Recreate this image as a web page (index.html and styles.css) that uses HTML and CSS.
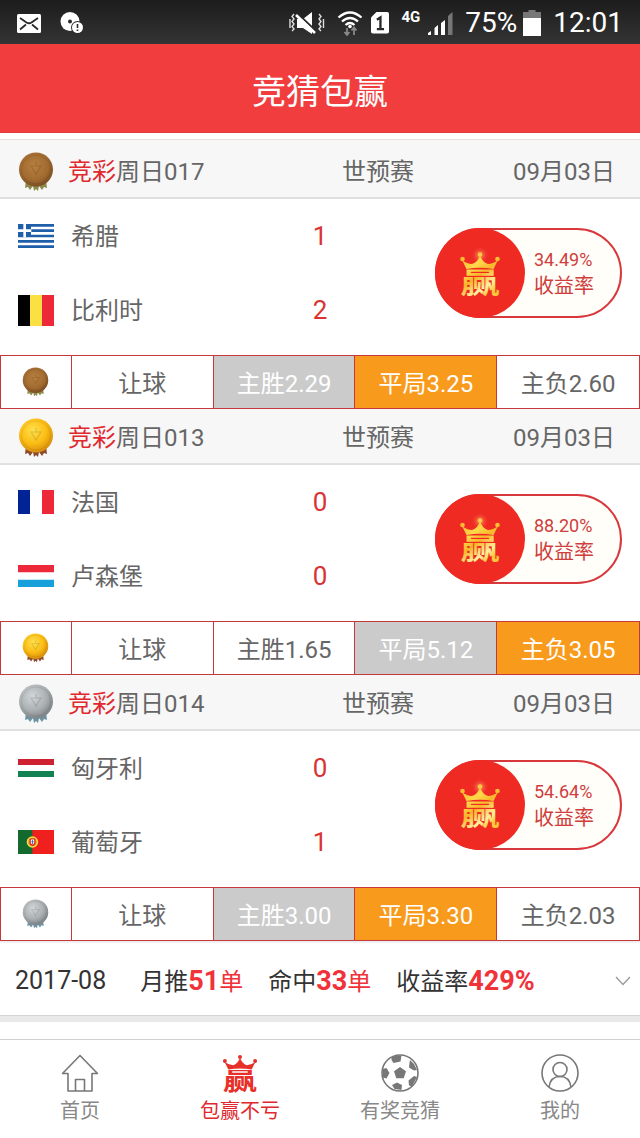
FILE: index.html
```html
<!DOCTYPE html>
<html lang="zh-CN">

<head>
    <meta charset="UTF-8">
    <meta name="viewport" content="width=device-width, initial-scale=1">
    <title>竞猜包赢</title>
    <link rel="stylesheet" href="styles.css">
</head>

<body>
    <!-- shared icons -->
    <svg class="sprite" aria-hidden="true">
        <defs>
            <radialGradient id="bronze" cx="0.45" cy="0.4" r="0.6">
                <stop offset="0" stop-color="#b9803f" />
                <stop offset="0.7" stop-color="#a06a30" />
                <stop offset="1" stop-color="#7c4f22" />
            </radialGradient>
            <radialGradient id="gold" cx="0.42" cy="0.35" r="0.65">
                <stop offset="0" stop-color="#ffe14d" />
                <stop offset="0.6" stop-color="#fbbd14" />
                <stop offset="1" stop-color="#d98f0c" />
            </radialGradient>
            <radialGradient id="silver" cx="0.4" cy="0.35" r="0.65">
                <stop offset="0" stop-color="#d3d7d9" />
                <stop offset="0.65" stop-color="#a9aeb1" />
                <stop offset="1" stop-color="#7f8588" />
            </radialGradient>
            <linearGradient id="shine" gradientUnits="userSpaceOnUse" x1="0" y1="0" x2="30" y2="42">
                <stop offset="0" stop-color="#f7a823" />
                <stop offset="0.4" stop-color="#ffd84a" />
                <stop offset="0.6" stop-color="#f9b52a" />
                <stop offset="0.85" stop-color="#fff0a0" />
                <stop offset="1" stop-color="#fcc63c" />
            </linearGradient>
            <radialGradient id="glow">
                <stop offset="0" stop-color="#ffb070" stop-opacity="0.9" />
                <stop offset="1" stop-color="#ef2a22" stop-opacity="0" />
            </radialGradient>
            <clipPath id="below-crown">
                <rect x="0" y="18.500" width="40" height="27" />
            </clipPath>
        </defs>
        <symbol id="medal" viewBox="0 0 36 40">
            <path d="M8 28l-1 8 3-1 2 3 3-4 1 5 2-2 2 2 1-5 3 4 2-3 3 1-1-8z" style="fill: currentColor" />
            <circle cx="18" cy="17.500" r="17" />
            <circle cx="18" cy="17.500" r="14.500" style="fill: none" stroke="#000" stroke-opacity="0.08" />
            <path d="M13 14h10l-5 8zM18 10v4" style="fill: none" stroke="#000" stroke-opacity="0.1" stroke-width="1.500" />
        </symbol>
        <symbol id="crown" viewBox="0 0 40 44">
            <circle cx="20" cy="3.500" r="2.300" />
            <circle cx="2.500" cy="8" r="2.300" />
            <circle cx="37.500" cy="8" r="2.300" />
            <path d="M2 9Q7 13 12 13Q18 11 20 4Q22 11 28 13Q33 13 38 9L33.500 18Q20 15.500 6.500 18z" />
        </symbol>
    </svg>

    <div class="status-bar">
        <div class="status-group">
            <svg class="status-mail" viewBox="0 0 24 19">
                <rect width="24" height="19" rx="1.500" fill="#fff" />
                <path d="M3 4l6.500 4.500q2.500 1.500 5 0L21 4M3 15.500l6-5M21 15.500l-6-5" fill="none" stroke="#292929" stroke-width="1.800" />
            </svg>
            <svg class="status-disc" viewBox="0 0 24 22">
                <circle cx="10" cy="9.500" r="9.500" fill="#fff" />
                <circle cx="10" cy="9.500" r="2" fill="#292929" />
                <circle cx="17.500" cy="15.500" r="6.500" fill="#292929" />
                <circle cx="17.500" cy="15.500" r="5.500" fill="#fff" />
                <path d="M17.500 12v4M17.500 17.500v1.500" stroke="#292929" stroke-width="1.600" />
            </svg>
        </div>
        <div class="status-group status-right">
            <svg class="status-mute" viewBox="0 0 36 24">
                <path d="M8 8h6l9-7v22l-9-6H8z" fill="#fff" />
                <path d="M9 3l18 17" stroke="#292929" stroke-width="2" />
                <path d="M7 4l19 18" stroke="#fff" stroke-width="2.600" />
                <path d="M5 3l-2 2.500 2 2.500-2 2.500 2 2.500-2 2.500 2 2.500-2 2M1 8v9M30 3l2 2.500-2 2.500 2 2.500-2 2.500 2 2.500-2 2.500 2 2M34.500 8v9" fill="none" stroke="#ddd" stroke-width="1.400" />
            </svg>
            <svg class="status-wifi" viewBox="0 0 26 26">
                <path d="M1.500 7.500q11.500-10 23 0M5 11.500q8-7 16 0M8.500 15q4.500-4 9 0" fill="none" stroke="#fff" stroke-width="2.300" />
                <circle cx="13" cy="16.500" r="1.800" fill="#fff" />
                <path d="M10 18v7M7.500 22l2.500 3 2.500-3M17 25v-7M14.500 20.500l2.500-3 2.500 3" fill="none" stroke="#888" stroke-width="1.800" />
            </svg>
            <svg class="status-sim" viewBox="0 0 20 24">
                <path d="M6 0h12q2 0 2 2v20q0 2-2 2H2q-2 0-2-2V6z" fill="#fff" />
                <path d="M6.500 8.500l4-2.500v13M6.500 19h8" fill="none" stroke="#292929" stroke-width="2.600" />
            </svg>
            <span class="network">4G</span>
            <svg class="status-signal" viewBox="0 0 25 24">
                <path d="M0 24v-2l3-2v4zM6.500 24v-7l3.500-3v10zM13 24V12l4-3v15z" fill="#fff" />
                <path d="M20 24V5l4.500-4v23z" fill="#777" />
            </svg>
            <span class="battery-text">75%</span>
            <svg class="status-battery" viewBox="0 0 18 26">
                <path d="M5.500 0h7v2H18v7H0V2h5.500z" fill="#777" />
                <path d="M0 8h18v18H0z" fill="#fff" />
            </svg>
            <span class="clock">12:01</span>
        </div>
    </div>

    <header class="title-bar">
        <h1>竞猜包赢</h1>
    </header>

    <main class="matches">
        <section class="match">
            <div class="match-head">
                <svg class="medal bronze" viewBox="0 0 36 40"><use href="#medal" fill="url(#bronze)" /></svg>
                <h2><em>竞彩</em>周日017</h2>
                <span class="league">世预赛</span>
                <span>09月03日</span>
            </div>
            <div class="match-body">
                <div class="teams">
                    <div class="team">
                        <svg class="flag" viewBox="0 0 36 24">
                            <path fill="#1f5ea8" d="M0 0h36v24H0z" />
                            <path stroke="#fff" stroke-width="2.670" d="M13 4h23M13 9.330h23M0 14.670h36M0 20h36" />
                            <path stroke="#fff" stroke-width="2.670" d="M0 6.670h13.330M6.670 0v13.330" />
                        </svg>
                        <span>希腊</span>
                        <b class="score">1</b>
                    </div>
                    <div class="team">
                        <svg class="flag" viewBox="0 0 36 31">
                            <path d="M0 0h12v31H0z" />
                            <path fill="#fae042" d="M12 0h12v31H12z" />
                            <path fill="#ed2939" d="M24 0h12v31H24z" />
                        </svg>
                        <span>比利时</span>
                        <b class="score">2</b>
                    </div>
                </div>
                <div class="profit">
                    <div class="profit-logo">
                        <svg viewBox="0 0 40 44" fill="url(#shine)">
                            <circle cx="20" cy="4" r="9" fill="url(#glow)" />
                            <use href="#crown" />
                            <text x="20" y="41" text-anchor="middle" clip-path="url(#below-crown)">赢</text>
                        </svg>
                    </div>
                    <div class="profit-text"><strong>34.49%</strong>收益率</div>
                </div>
            </div>
            <div class="odds">
                <div class="cell"><svg class="medal small bronze" viewBox="0 0 36 40"><use href="#medal" fill="url(#bronze)" /></svg></div>
                <button class="cell">让球</button>
                <button class="cell grey">主胜2.29</button>
                <button class="cell orange">平局3.25</button>
                <button class="cell">主负2.60</button>
            </div>
        </section>

        <section class="match">
            <div class="match-head">
                <svg class="medal gold" viewBox="0 0 36 40"><use href="#medal" fill="url(#gold)" /></svg>
                <h2><em>竞彩</em>周日013</h2>
                <span class="league">世预赛</span>
                <span>09月03日</span>
            </div>
            <div class="match-body">
                <div class="teams">
                    <div class="team">
                        <svg class="flag" viewBox="0 0 36 24">
                            <path fill="#fff" d="M0 0h36v24H0z" />
                            <path fill="#002395" d="M0 0h12v24H0z" />
                            <path fill="#ed2939" d="M24 0h12v24H24z" />
                        </svg>
                        <span>法国</span>
                        <b class="score">0</b>
                    </div>
                    <div class="team">
                        <svg class="flag" viewBox="0 0 36 22">
                            <path fill="#fff" d="M0 0h36v22H0z" />
                            <path fill="#ed2939" d="M0 0h36v7.330H0z" />
                            <path fill="#18a0db" d="M0 14.670h36V22H0z" />
                        </svg>
                        <span>卢森堡</span>
                        <b class="score">0</b>
                    </div>
                </div>
                <div class="profit">
                    <div class="profit-logo">
                        <svg viewBox="0 0 40 44" fill="url(#shine)">
                            <circle cx="20" cy="4" r="9" fill="url(#glow)" />
                            <use href="#crown" />
                            <text x="20" y="41" text-anchor="middle" clip-path="url(#below-crown)">赢</text>
                        </svg>
                    </div>
                    <div class="profit-text"><strong>88.20%</strong>收益率</div>
                </div>
            </div>
            <div class="odds">
                <div class="cell"><svg class="medal small gold" viewBox="0 0 36 40"><use href="#medal" fill="url(#gold)" /></svg></div>
                <button class="cell">让球</button>
                <button class="cell">主胜1.65</button>
                <button class="cell grey">平局5.12</button>
                <button class="cell orange">主负3.05</button>
            </div>
        </section>

        <section class="match">
            <div class="match-head">
                <svg class="medal silver" viewBox="0 0 36 40"><use href="#medal" fill="url(#silver)" /></svg>
                <h2><em>竞彩</em>周日014</h2>
                <span class="league">世预赛</span>
                <span>09月03日</span>
            </div>
            <div class="match-body">
                <div class="teams">
                    <div class="team">
                        <svg class="flag" viewBox="0 0 36 18">
                            <path fill="#fff" d="M0 0h36v18H0z" />
                            <path fill="#ce2233" d="M0 0h36v6H0z" />
                            <path fill="#128253" d="M0 12h36v6H0z" />
                        </svg>
                        <span>匈牙利</span>
                        <b class="score">0</b>
                    </div>
                    <div class="team">
                        <svg class="flag" viewBox="0 0 36 24">
                            <path fill="#f0201e" d="M0 0h36v24H0z" />
                            <path fill="#14692f" d="M0 0h14.400v24H0z" />
                            <circle cx="14.400" cy="12" r="5" fill="#c4a437" stroke="#f4dd3c" stroke-width="1.500" />
                            <path fill="#e22" d="M11.500 8.500h6v4q0 3-3 3.500q-3-.500-3-3.500z" />
                            <path fill="#fff" d="M12.800 9.500h3.400v3q0 1.500-1.700 2q-1.700-.500-1.700-2z" />
                            <path stroke="#315a9c" stroke-width="0.800" d="M14.500 10v4M13.200 11.800h2.600" />
                        </svg>
                        <span>葡萄牙</span>
                        <b class="score">1</b>
                    </div>
                </div>
                <div class="profit">
                    <div class="profit-logo">
                        <svg viewBox="0 0 40 44" fill="url(#shine)">
                            <circle cx="20" cy="4" r="9" fill="url(#glow)" />
                            <use href="#crown" />
                            <text x="20" y="41" text-anchor="middle" clip-path="url(#below-crown)">赢</text>
                        </svg>
                    </div>
                    <div class="profit-text"><strong>54.64%</strong>收益率</div>
                </div>
            </div>
            <div class="odds">
                <div class="cell"><svg class="medal small silver" viewBox="0 0 36 40"><use href="#medal" fill="url(#silver)" /></svg></div>
                <button class="cell">让球</button>
                <button class="cell grey">主胜3.00</button>
                <button class="cell orange">平局3.30</button>
                <button class="cell">主负2.03</button>
            </div>
        </section>

        <button class="month">
            <span class="month-date">2017-08</span>
            <span>月推<b>51</b><i>单</i></span>
            <span>命中<b>33</b><i>单</i></span>
            <span>收益率<b>429%</b></span>
            <svg class="arrow" viewBox="0 0 16 10"><path d="M1 1l7 7.500L15 1" fill="none" stroke="#999" stroke-width="1.300" /></svg>
        </button>
    </main>

    <nav class="tabs">
        <a href="#home">
            <svg viewBox="0 0 38 38" fill="none" stroke="#777" stroke-width="1.600" stroke-linejoin="round">
                <path d="M19 1.500L1.500 19.500H7V37h24V19.500h5.500z" />
                <path d="M14.500 37V25.500h9V37" />
            </svg>
            首页
        </a>
        <a href="#win-list" class="active">
            <svg viewBox="0 0 40 44" fill="#e8302a">
                <use href="#crown" />
                <text x="20" y="41" text-anchor="middle" clip-path="url(#below-crown)">赢</text>
            </svg>
            包赢不亏
        </a>
        <a href="#guess">
            <svg viewBox="0 0 38 38">
                <circle cx="19" cy="19" r="18" fill="#fff" stroke="#777" stroke-width="1.600" />
                <path fill="#777" d="M19 13l6 4.300-2.300 7h-7.400l-2.300-7zM10.500 3.500l4-2h6l-1 6-7 1.500-2-3zM29 6l4 4 3 6-3 .500-5-3 .500-4.500zM1.500 15l4-1 3 5-3 5.500-3.500-1zM36 23l-3-1-5.500 4.500.500 5 3 1zM11 31l5-2.500 5 2.500-.500 5-7-1z" />
            </svg>
            有奖竞猜
        </a>
        <a href="#mine">
            <svg viewBox="0 0 38 38" fill="none" stroke="#777" stroke-width="1.600">
                <circle cx="19" cy="19" r="18" />
                <circle cx="19" cy="15.500" r="7" />
                <path d="M8 33q1.500-10.500 11-10.500T30 33" />
            </svg>
            我的
        </a>
    </nav>
</body>

</html>
```
FILE: styles.css
```css
* {
    box-sizing: border-box;
}

body {
    display: flex;
    flex-direction: column;
    min-height: 100vh;
    margin: 0;
    background-color: #fff;
    color: #666;
    font-family: Roboto, "Noto Sans CJK SC", sans-serif;
    font-size: 24px;
    line-height: 32px;
}

svg {
    display: block;
    flex: none;
}

button {
    border: none;
    padding: 0;
    background: none;
    color: inherit;
    font: inherit;
    cursor: pointer;
}

.sprite {
    position: absolute;
    width: 0;
    height: 0;
}

/* status bar */
.status-bar {
    display: flex;
    justify-content: space-between;
    align-items: center;
    height: 44px;
    padding: 2px 17px 0;
    background: linear-gradient(#1c1c1c, #343434);
    color: #fff;
}

.status-group {
    display: flex;
    align-items: center;
    gap: 19px;
}

.status-right {
    gap: 8px;
}

.status-mail,
.status-disc {
    width: 24px;
}

.status-mute {
    width: 36px;
    margin-right: 4px;
}

.status-wifi {
    width: 26px;
}

.status-sim {
    width: 18px;
}

.status-signal {
    width: 25px;
    margin-right: 4px;
}

.status-battery {
    width: 18px;
    margin-right: 4px;
}

.network {
    align-self: flex-start;
    margin-left: 4px;
    font-size: 15px;
    font-weight: bold;
    line-height: 20px;
}

.battery-text,
.clock {
    font-size: 28px;
}

.battery-text {
    margin-right: -2px;
}

/* title */
.title-bar {
    height: 89px;
    border-bottom: 1px solid #e23a3c;
    background-color: #f13d3e;
    color: #fff;
    text-align: center;
}

.title-bar h1 {
    margin: 0;
    font-size: 34px;
    font-weight: normal;
    line-height: 96px;
}

/* matches */
.matches {
    margin-top: 6px;
    border-top: 1px solid #eddcdc;
    border-bottom: 6px solid #e9e9e9;
    padding-top: 3px;
    background-color: #f7f7f7;
}

.match-head {
    display: flex;
    align-items: center;
    height: 56px;
    padding: 3px 25px 0 18px;
    border-bottom: 2px solid #e0e0e0;
    background-color: #f7f7f7;
}

.match-head h2 {
    flex: 1;
    margin: 0 0 0 14px;
    font-size: 24px;
    font-weight: normal;
}

.match-head em {
    color: #e0282e;
    font-style: normal;
}

.league {
    width: 171px;
}

.medal {
    width: 36px;
}

.medal.small {
    width: 27px;
}

.bronze {
    color: #8c8a4c;
}

.gold {
    color: #8c4a2c;
}

.silver {
    color: #6d93a3;
}

.match-body {
    display: flex;
    align-items: center;
    padding: 0 18px 8px;
    background-color: #fff;
}

.teams {
    flex: 1;
}

.team {
    display: flex;
    align-items: center;
    height: 74px;
}

.team span {
    padding-top: 2px;
}

.flag {
    width: 36px;
    margin-right: 17px;
}

.score {
    width: 230px;
    margin-left: auto;
    color: #d93434;
    font-weight: normal;
    font-size: 26px;
    text-align: center;
}

.profit {
    display: flex;
    width: 187px;
    height: 90px;
    border: 2px solid #d8383c;
    border-radius: 45px;
    background-color: #fffef8;
    color: #cf3d3d;
}

.profit-logo {
    display: flex;
    justify-content: center;
    align-items: center;
    width: 90px;
    height: 90px;
    margin: -2px 9px 0 -2px;
    border-radius: 50%;
    background-color: #ef2a22;
}

.profit-logo svg {
    width: 40px;
    overflow: visible;
}

.profit-logo text,
.tabs text {
    font-family: "Noto Sans CJK SC", sans-serif;
    font-size: 40px;
    font-weight: bold;
}

.profit-text {
    padding-top: 16px;
    font-size: 20px;
    line-height: 27px;
}

.profit-text strong {
    display: block;
    font-size: 18px;
    font-weight: normal;
}

/* odds row */
.odds {
    display: grid;
    grid-template-columns: 1fr 2fr 2fr 2fr 2fr;
    height: 54px;
    border: 1px solid #c5383c;
    background-color: #fff;
}

.cell {
    display: flex;
    justify-content: center;
    align-items: center;
    border-right: 1px solid #c5383c;
}

.odds button {
    padding-top: 4px;
}

.cell:last-child {
    border-right: none;
}

.grey {
    background-color: #cbcbcb;
    color: #fff;
}

.orange {
    background-color: #f89a1c;
    color: #fff;
}

/* month summary */
.month {
    display: flex;
    align-items: center;
    gap: 25px;
    width: 100%;
    height: 75px;
    padding: 4px 9px 0 15px;
    border-top: 2px solid #f0f0f0;
    border-bottom: 1px solid #d4d4d4;
    background-color: #fff;
    color: #333;
    white-space: nowrap;
}

.month-date {
    margin-right: 9px;
    font-size: 25px;
}

.month b {
    color: #f0323a;
    font-size: 27px;
}

.month i {
    color: #f0323a;
    font-style: normal;
}

.arrow {
    width: 16px;
    margin-left: auto;
}

/* bottom tabs */
.tabs {
    display: grid;
    grid-template-columns: repeat(4, 1fr);
    margin-top: auto;
    border-top: 1px solid #d0d0d0;
    background-color: #fff;
}

.tabs a {
    display: flex;
    flex-direction: column;
    align-items: center;
    gap: 4px;
    padding: 14px 0 12px;
    color: #888;
    font-size: 20px;
    line-height: 30px;
    text-decoration: none;
}

.tabs svg {
    width: 38px;
    height: 38px;
    overflow: visible;
}

.tabs .active {
    color: #e0282e;
}
```
